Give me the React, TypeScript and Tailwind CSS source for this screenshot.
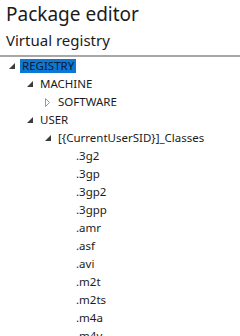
type Node = {
  level: number;
  label: string;
  state: "open" | "closed" | "leaf";
  selected?: boolean;
};

const rows: Node[] = [
  { level: 0, label: "REGISTRY", state: "open", selected: true },
  { level: 1, label: "MACHINE", state: "open" },
  { level: 2, label: "SOFTWARE", state: "closed" },
  { level: 1, label: "USER", state: "open" },
  { level: 2, label: "[{CurrentUserSID}]_Classes", state: "open" },
  { level: 3, label: ".3g2", state: "leaf" },
  { level: 3, label: ".3gp", state: "leaf" },
  { level: 3, label: ".3gp2", state: "leaf" },
  { level: 3, label: ".3gpp", state: "leaf" },
  { level: 3, label: ".amr", state: "leaf" },
  { level: 3, label: ".asf", state: "leaf" },
  { level: 3, label: ".avi", state: "leaf" },
  { level: 3, label: ".m2t", state: "leaf" },
  { level: 3, label: ".m2ts", state: "leaf" },
  { level: 3, label: ".m4a", state: "leaf" },
  { level: 3, label: ".m4v", state: "leaf" },
];

const indent = ["pl-[9px]", "pl-[27px]", "pl-[45px]", "pl-[63px]"];

function Glyph({ state }: { state: Node["state"] }) {
  if (state === "open") {
    return (
      <svg width="6" height="6" viewBox="0 0 6 6">
        <polygon points="6,0 6,6 0,6" fill="#3c3c3c" />
      </svg>
    );
  }
  if (state === "closed") {
    return (
      <svg width="5" height="9" viewBox="0 0 5 9">
        <polygon points="0.5,0.5 4.5,4.5 0.5,8.5" fill="none" stroke="#9a9a9a" strokeWidth="1" />
      </svg>
    );
  }
  return null;
}

export default function App() {
  return (
    <div
      className="w-[240px] h-[336px] overflow-hidden bg-white text-[#1b1b1b]"
      style={{ fontFamily: '"Noto Sans", "Open Sans", sans-serif' }}
    >
      <div className="px-[6px] pt-[1px] h-[28px] text-[19px] leading-[26px]">Package editor</div>
      <div className="px-[6px] h-[27px] text-[15px] leading-[24px]">Virtual registry</div>
      <div className="h-[2px] bg-[#a8a8a8]" />

      <ul className="text-[11.5px]">
        {rows.map((r, i) => (
          <li key={i} className={`flex items-center h-[18px] ${indent[r.level]}`}>
            <span className="w-[11px] flex items-center">
              <Glyph state={r.state} />
            </span>
            <span
              className={`px-[2px] h-[14px] leading-[14px] whitespace-nowrap ${
                r.selected ? "bg-[#0a78d4] text-[#101830]" : ""
              }`}
            >
              {r.label}
            </span>
          </li>
        ))}
      </ul>
    </div>
  );
}
